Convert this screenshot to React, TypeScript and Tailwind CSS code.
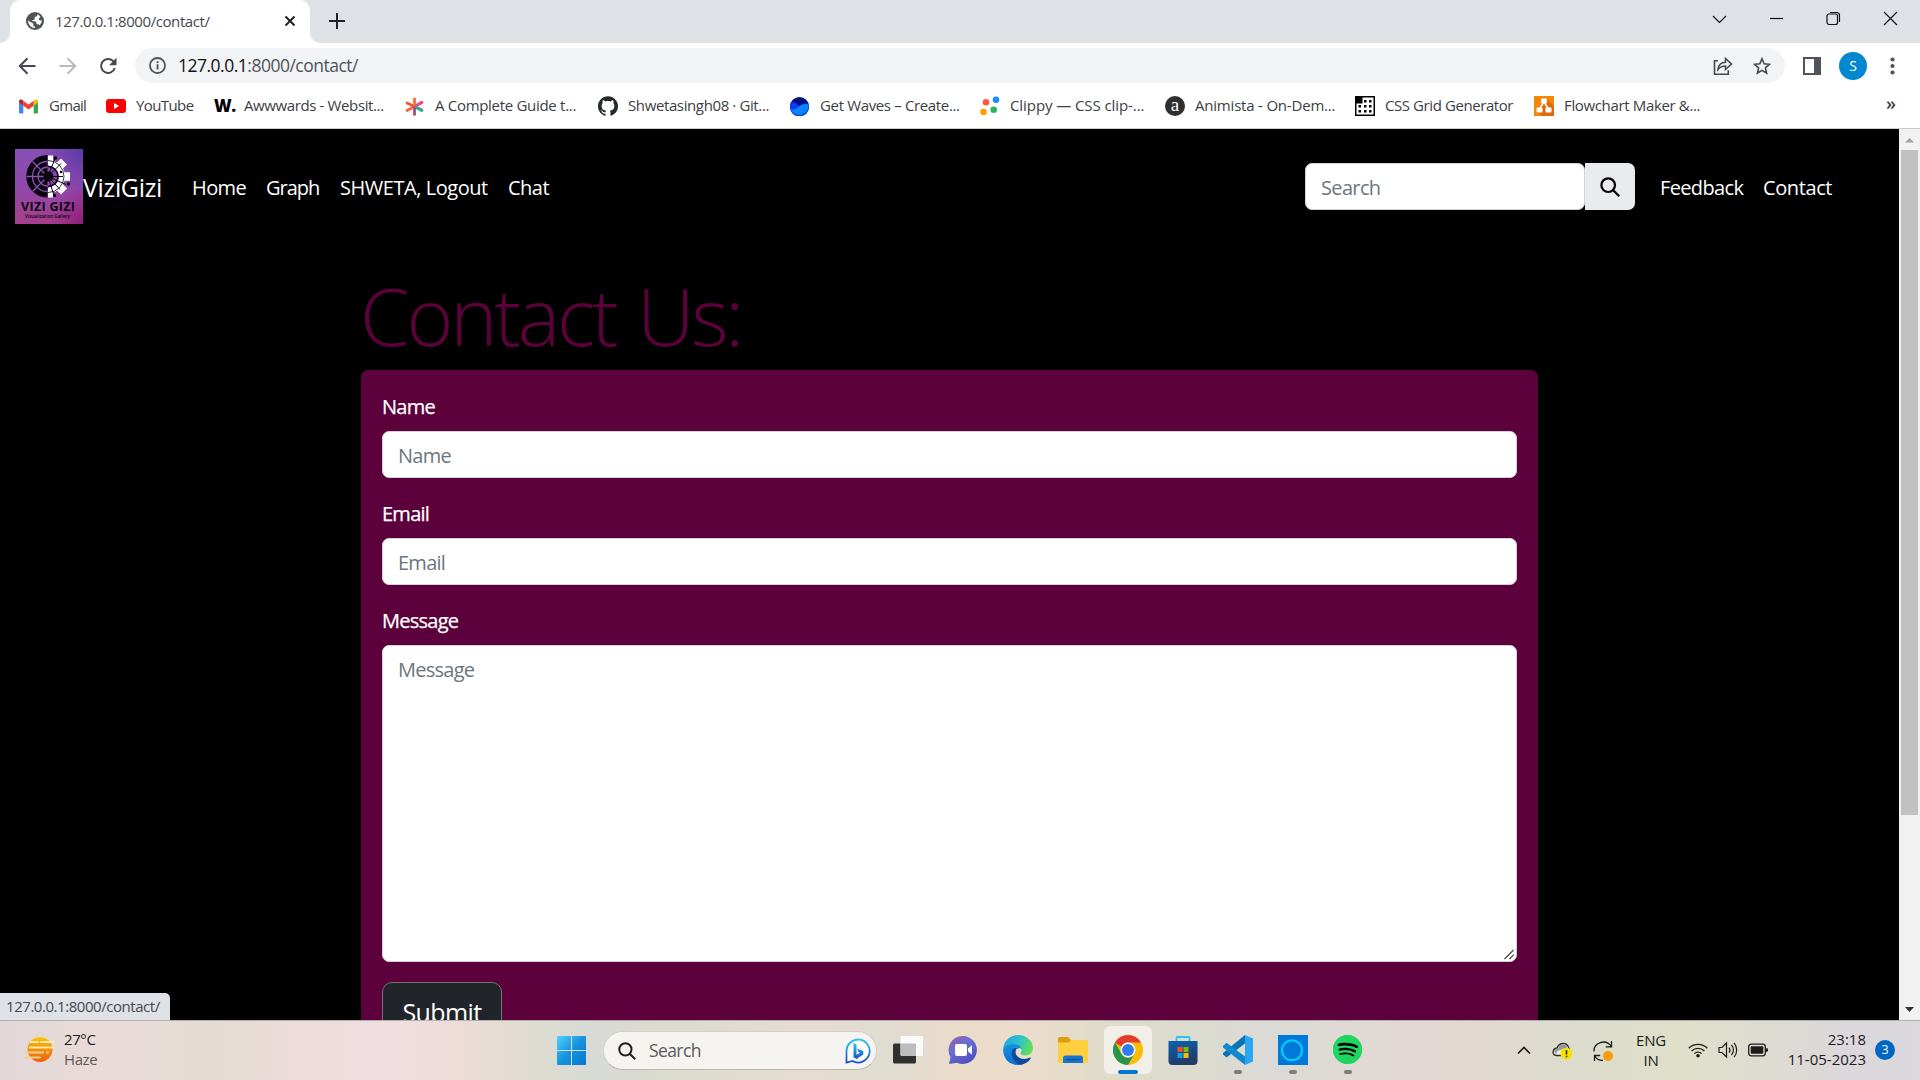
import React from "react";
import { SiGithub, SiSpotify } from "react-icons/si";

type IconProps = { className?: string };

const GlobeIcon = () => (
  <svg className="h-[18px] w-[18px]" viewBox="0 0 18 18">
    <circle cx="9" cy="9" r="9" fill="#50545a" />
    <path d="M11.300 2.300c.3 1.500-.6 2.300-1.900 2.500-1 .1-1 .8-.7 1.500.4 1-.3 1.700-1.400 1.700H6.200c0 1.200.8 1.400 2.400 1.300 1.500 0 1.800.7 1.800 1.700 0 .9.5 1.200 1.300 1.200.9 0 1.500.3 1.800 1A7 7 0 0 0 15.900 8c-.7.5-1.600.6-2.300.2-.8-.5-.9-1.300-.4-2 .5-.6 1-.8 1.200-1.600a7 7 0 0 0-3.100-2.300z" fill="#fff" />
    <path d="M2.100 8.300c1.400 1.300 3.300 2.200 4.300 2.600 1 .5 1.100 1.100.9 2-.2.700.2 1.300.9 1.400.6.200.8.800.8 1.600A6.900 6.900 0 0 1 2.100 8.300z" fill="#fff" />
  </svg>
);

const Gmail = () => (
  <svg className="h-[15px] w-[19px]" viewBox="0 0 19 14">
    <path d="M0 1.600V13a1 1 0 0 0 1 1h3.300V5.500z" fill="#4285f4" />
    <path d="M14.700 5.500V14H18a1 1 0 0 0 1-1V1.600z" fill="#34a853" />
    <path d="M14.700 1.200v5l4.300-3.300V1.800C19 .2 17.200-.5 16 .3z" fill="#fbbc04" />
    <path d="M4.300 6.200v-5L9.500 5.100l5.200-3.900v5L9.500 10.100z" fill="#ea4335" />
    <path d="M0 1.800v1.100l4.300 3.300v-5L3 .3C1.800-.5 0 .2 0 1.800z" fill="#c5221f" />
  </svg>
);

const YouTube = () => (
  <svg className="h-[14px] w-5" viewBox="0 0 20 14">
    <rect width="20" height="14" rx="3" fill="#f00" />
    <path d="M8 4v6l5.200-3z" fill="#fff" />
  </svg>
);

const Wmark = () => (
  <span className="flex h-5 w-[22px] items-center font-['Open_Sans','Liberation_Sans',sans-serif] text-[17px] font-extrabold tracking-[-0.5px] text-black">
    W.
  </span>
);

const Asterisk = () => (
  <svg className="h-[19px] w-[19px]" viewBox="0 0 19 19">
    <g strokeWidth="2.700" strokeLinecap="round" fill="none">
      <path d="M2 6l15 7" stroke="#f0503c" />
      <path d="M2 13.500l15-8" stroke="#ff5e3a" />
      <path d="M9.500 9.500l7-4" stroke="#e54a8a" />
      <path d="M9.500 9.500l7 4" stroke="#1fb0a0" />
      <path d="M9.500 1.800v15.500" stroke="#ff6a2b" />
      <path d="M9.500 10v7.300" stroke="#a0508c" />
    </g>
  </svg>
);

const Waves = () => (
  <svg className="h-[19px] w-[19px]" viewBox="0 0 19 19">
    <circle cx="9.500" cy="9.500" r="9.500" fill="#001080" />
    <path d="M.3 7.500C2 5 5 4.500 7 7c2 2.600 4 2.500 6 .5s4-1.500 5.700.3A9.500 9.500 0 1 1 .3 7.500z" fill="#0a3cf0" />
    <path d="M.6 12.500c4 .5 6-.5 8.500-3s6-3.500 9.600-1.700A9.500 9.500 0 0 1 .6 12.500z" fill="#0a84ff" />
  </svg>
);

const Clippy = () => (
  <svg className="h-5 w-5" viewBox="0 0 20 20">
    <circle cx="6" cy="6.300" r="3.300" fill="#ff5a3c" />
    <circle cx="16" cy="3.700" r="3.300" fill="#1a8cff" />
    <circle cx="3.500" cy="16" r="3.300" fill="#ffa000" />
    <circle cx="13.700" cy="13.800" r="3.300" fill="#28b463" />
  </svg>
);

const Animista = () => (
  <span className="flex h-5 w-5 items-center justify-center rounded-full bg-[#2f2f2f] pb-[3px] font-['Liberation_Serif',serif] text-[19px] leading-none text-white">
    a
  </span>
);

const gridDots = [
  [9, 4], [14, 4], [3.5, 9], [9, 9], [14, 9], [3.5, 14], [9, 14], [14, 14],
];

const CssGrid = () => (
  <svg className="h-5 w-5" viewBox="0 0 20 20">
    <rect width="20" height="20" fill="#000" />
    <path d="M7.500 1.500h11v17h-17v-11h6z" fill="#fff" />
    <g fill="#000">
      {gridDots.map(([x, y]) => (
        <rect key={`${x}-${y}`} x={x} y={y} width="2.500" height="2.500" />
      ))}
    </g>
  </svg>
);

const Flowchart = () => (
  <svg className="h-5 w-5" viewBox="0 0 20 20">
    <rect width="20" height="20" fill="#f08705" />
    <path d="M12.500 3 20 10v10H8l-5-4z" fill="#df6c0c" />
    <path d="M10 6 5.500 13M10 6l4.500 7" stroke="#fff" strokeWidth="1.500" />
    <rect x="7" y="2.500" width="6" height="5" rx="1" fill="#fff" />
    <rect x="2.500" y="11.500" width="6" height="5" rx="1" fill="#fff" />
    <rect x="11.500" y="11.500" width="6" height="5" rx="1" fill="#fff" />
  </svg>
);

const bookmarks = [
  { label: "Gmail", icon: <Gmail />, width: "w-[87px]", text: "tracking-[-0.7px]" },
  { label: "YouTube", icon: <YouTube />, width: "w-[108px]", text: "tracking-[-0.6px]" },
  { label: "Awwwards - Websit...", icon: <Wmark />, width: "w-[191px]", text: "tracking-[-0.38px]" },
  { label: "A Complete Guide t...", icon: <Asterisk />, width: "w-[193px]", text: "tracking-[-0.3px]" },
  { label: "Shwetasingh08 · Git...", icon: <SiGithub className="h-5 w-5 text-[#24292f]" />, width: "w-[192px]", text: "tracking-[-0.38px]" },
  { label: "Get Waves – Create...", icon: <Waves />, width: "w-[190px]", text: "tracking-[-0.35px]" },
  { label: "Clippy — CSS clip-...", icon: <Clippy />, width: "w-[185px]", text: "tracking-[-0.08px]" },
  { label: "Animista - On-Dem...", icon: <Animista />, width: "w-[190px]", text: "tracking-[-0.2px]" },
  { label: "CSS Grid Generator", icon: <CssGrid />, width: "w-[179px]", text: "tracking-[-0.42px]" },
  { label: "Flowchart Maker &...", icon: <Flowchart />, width: "w-[180px]", text: "tracking-[-0.35px]" },
];

function TabStrip() {
  return (
    <div className="flex h-[43px] shrink-0 items-stretch bg-[#dee1e6]">
      <div className="flex w-2.5 items-end bg-white">
        <div className="h-full w-full rounded-br-[10px] bg-[#dee1e6]" />
      </div>
      <div className="w-[300px] bg-[#dee1e6]">
        <div className="flex h-full items-center rounded-t-[10px] bg-white pb-px pl-4 pr-3.5">
          <GlobeIcon />
          <span className="ml-[11px] flex-1 text-[15px] tracking-[-0.42px] text-[#45494d]">127.0.0.1:8000/contact/</span>
          <svg className="h-[12px] w-[12px]" viewBox="0 0 12 12">
            <path d="M1.500 1.500l9 9m0-9l-9 9" stroke="#202124" strokeWidth="2" />
          </svg>
        </div>
      </div>
      <div className="w-2.5 bg-white">
        <div className="h-full w-full rounded-bl-[10px] bg-[#dee1e6]" />
      </div>
      <svg className="ml-[9px] mt-[13px] h-4 w-4" viewBox="0 0 16 16">
        <path d="M8 0v16M0 8h16" stroke="#202124" strokeWidth="2" />
      </svg>
      <div className="ml-auto mr-px flex h-[37px] items-center">
        {[
          "M2 6l6.500 6.500L15 6",
          "M2 8.500h13",
          "",
          "M2 2l13 13M15 2L2 15",
        ].map((d, i) => (
          <div key={i} className="flex w-[57px] items-center justify-center">
            <svg className="h-[17px] w-[17px]" viewBox="0 0 17 17" fill="none" stroke="#111" strokeWidth="1.200">
              {d ? (
                <path d={d} />
              ) : (
                <g>
                  <rect x="2" y="4" width="10.500" height="10.500" rx="2" />
                  <path d="M5 2.500h6.500a3 3 0 0 1 3 3v6.500" />
                </g>
              )}
            </svg>
          </div>
        ))}
      </div>
    </div>
  );
}

function Toolbar() {
  return (
    <div className="flex h-[45px] shrink-0 items-center bg-white">
      <svg className="ml-[18px] h-[18px] w-[18px]" viewBox="0 0 18 18" fill="none" stroke="#45494d" strokeWidth="2">
        <path d="M17.500 9H2M9.500 1.300L1.800 9l7.700 7.700" />
      </svg>
      <svg className="ml-[23px] h-[18px] w-[18px]" viewBox="0 0 18 18" fill="none" stroke="#b9bbbe" strokeWidth="2">
        <path d="M.5 9H16M8.500 1.300L16.200 9l-7.700 7.700" />
      </svg>
      <svg className="ml-[22px] h-[18px] w-[18px]" viewBox="0 0 18 18">
        <path d="M15.800 11A7 7 0 1 1 14 3.900L16 6" fill="none" stroke="#45494d" strokeWidth="2" />
        <path d="M17.500.8v7.400h-7.400z" fill="#45494d" />
      </svg>
      <div className="ml-[18px] flex h-[35px] w-[1650px] items-center rounded-full bg-[#f1f3f4] pl-3.5 pr-3.5">
        <svg className="h-[17px] w-[17px]" viewBox="0 0 17 17">
          <circle cx="8.500" cy="8.500" r="7.500" fill="none" stroke="#50545a" strokeWidth="1.800" />
          <path d="M7.600 7.300h1.900v5.200H7.600zM7.600 4.200h1.900v1.900H7.600z" fill="#50545a" />
        </svg>
        <span className="ml-[12px] text-[17.500px] tracking-[-0.5px] text-[#50545a]">
          <span className="text-[#111]">127.0.0.1</span>:8000/contact/
        </span>
        <svg className="ml-auto h-5 w-5" viewBox="0 0 20 20" fill="none" stroke="#45494d" strokeWidth="1.600">
          <path d="M5 4.800H1.500v13.500h13.800v-4" />
          <path d="M5 13.500c.4-4.500 3-7 7.500-7.200V2.500L18.500 8l-6 5.500V10C9.500 10 7 11 5 13.500z" />
        </svg>
        <svg className="ml-5 h-[18px] w-[18px]" viewBox="0 0 18 18" fill="none" stroke="#45494d" strokeWidth="1.600">
          <path d="M9 1.800l2.100 5 5.400.5-4.100 3.600 1.200 5.300L9 13.400l-4.600 2.800 1.200-5.300L1.500 7.300l5.400-.5z" />
        </svg>
      </div>
      <div className="ml-[18px] h-[18px] w-[18px] border-2 border-r-[7px] border-[#50545a]" />
      <div className="ml-[18px] flex h-7 w-7 items-center justify-center rounded-full bg-[#0288d1] text-[14px] text-white">S</div>
      <svg className="ml-[23px] h-[18px] w-[5px]" viewBox="0 0 5 18" fill="#50545a">
        <circle cx="2.500" cy="2.500" r="2.100" />
        <circle cx="2.500" cy="9" r="2.100" />
        <circle cx="2.500" cy="15.500" r="2.100" />
      </svg>
    </div>
  );
}

function BookmarksBar() {
  return (
    <div className="flex h-[41px] shrink-0 items-center border-b border-[#c9ccd0] bg-white pb-1 pl-[19px] pr-6">
      {bookmarks.map((b) => (
        <div key={b.label} className={`flex shrink-0 items-center ${b.width}`}>
          <div className="flex w-[30px] shrink-0 items-center">{b.icon}</div>
          <span className={`whitespace-nowrap pb-0.5 text-[15px] leading-5 text-[#3c4043] ${b.text}`}>{b.label}</span>
        </div>
      ))}
      <span className="ml-auto pb-1.5 text-[18px] font-semibold leading-5 text-[#3c4043]">»</span>
    </div>
  );
}

function SiteLogo() {
  return (
    <svg className="h-[75px] w-[68px] shrink-0" viewBox="0 0 68 75">
      <defs>
        <linearGradient id="logoBg" x1="0" y1="0" x2="0" y2="1">
          <stop offset="0" stopColor="#8650b4" />
          <stop offset=".5" stopColor="#9048ac" />
          <stop offset="1" stopColor="#a63f8c" />
        </linearGradient>
        <radialGradient id="logoShade" cx="1" cy="0" r=".6">
          <stop offset="0" stopColor="#5534a4" stopOpacity=".8" />
          <stop offset="1" stopColor="#5534a4" stopOpacity="0" />
        </radialGradient>
        <radialGradient id="logoShadeLow" cx="1" cy="1" r=".5">
          <stop offset="0" stopColor="#8a1478" stopOpacity=".8" />
          <stop offset="1" stopColor="#8a1478" stopOpacity="0" />
        </radialGradient>
      </defs>
      <rect width="68" height="75" fill="url(#logoBg)" />
      <rect width="68" height="75" fill="url(#logoShade)" />
      <rect width="68" height="75" fill="url(#logoShadeLow)" />
      <path d="M32.500 6a21.300 21.300 0 0 0 0 42.600z" fill="#0a0610" />
      <g fill="none" stroke="#fff">
        <path d="M33.500 14a13.500 13.500 0 0 1 0 27" strokeWidth="6" />
        <path d="M35.500 6.500v9M35.500 39.500v9" strokeWidth="5" />
        <path d="M44 17.500l5-5M44 37.500l5 5M46 27.500h9" strokeWidth="8.500" />
      </g>
      <g fill="none" stroke="#8c50b4" strokeWidth="1.300">
        <path d="M32.500 12.500a15 15 0 0 0 0 30M32.500 18a9.500 9.500 0 0 0 0 19" />
        <path d="M11.500 27.500H29M17.500 12.500l12 12M17.500 42.500l12-12" />
      </g>
      <g fill="none" stroke="#0a0610">
        <path d="M33 17.500a10 10 0 0 1 0 20" strokeWidth="1.300" />
        <path d="M33 11.500a16 16 0 0 1 0 32" strokeWidth=".8" />
        <path d="M33 27.500l7-18M33 27.500l13-13M33 27.500h15M33 27.500l18 8M33 27.500l12 13M33 27.500l6 19" strokeWidth="1" />
      </g>
      <circle cx="33.500" cy="27.500" r="5" fill="#0a0610" />
      <g fill="#0a0610">
        <circle cx="40.500" cy="9" r="1.700" />
        <circle cx="46" cy="23" r="1.300" />
        <circle cx="53.500" cy="35" r="1.700" />
        <circle cx="39.500" cy="46.500" r="1.700" />
      </g>
      <text x="33" y="61.500" textAnchor="middle" textLength="54" fontFamily="Open Sans, sans-serif" fontWeight="700" fontSize="12.500" fill="#0a0610">VIZI GIZI</text>
      <text x="32.500" y="69" textAnchor="middle" textLength="45" lengthAdjust="spacingAndGlyphs" fontFamily="Open Sans, sans-serif" fontWeight="600" fontSize="5.500" fill="#0a0610">Visualization Gallery</text>
    </svg>
  );
}

function SearchIcon({ className }: IconProps) {
  return (
    <svg className={className} viewBox="0 0 20 20" fill="none" strokeWidth="2.200">
      <circle cx="8.200" cy="8.200" r="6.800" stroke="currentColor" />
      <path d="M13 13l6.200 6.200" stroke="currentColor" />
    </svg>
  );
}

function Navbar() {
  return (
    <nav className="flex h-[115px] shrink-0 items-center pl-[15px] pr-[61px] text-[20px] leading-[30px] text-white">
      <SiteLogo />
      <span className="w-[109px] whitespace-nowrap text-[25px] tracking-[-0.35px]">ViziGizi</span>
      <div className="flex pt-[3px]">
        <a className="w-[74px] tracking-[-0.6px]">Home</a>
        <a className="w-[74px] tracking-[-1px]">Graph</a>
        <a className="w-[168px] whitespace-nowrap tracking-[-0.45px]">SHWETA, Logout</a>
        <a className="w-[60px] tracking-[-0.5px]">Chat</a>
      </div>
      <div className="ml-auto flex h-[47px] items-stretch">
        <div className="flex w-[280px] items-center rounded-[7px] border border-[#ced4da] bg-white pl-[15px] pt-0.5 tracking-[-0.65px] text-[#6c757d]">Search</div>
        <div className="flex w-[50px] items-center justify-center rounded-r-[7px] bg-[#e9ecef] text-black">
          <SearchIcon className="h-5 w-5" />
        </div>
      </div>
      <div className="ml-[25px] flex pt-[3px]">
        <a className="w-[103px] tracking-[-0.65px]">Feedback</a>
        <a className="w-[75px] tracking-[-0.4px]">Contact</a>
      </div>
    </nav>
  );
}

function Field({ label, tall }: { label: string; tall?: boolean }) {
  return (
    <div className="mb-5">
      <div className="mb-2 h-8 pt-px leading-[30px] tracking-[-0.75px] text-white [-webkit-text-stroke:0.25px_white]">{label}</div>
      <div
        className={`relative rounded-[7px] border border-[#ced4da] bg-white px-[15px] pt-[9px] leading-[30px] tracking-[-0.75px] text-[#6c757d] ${tall ? "h-[317px]" : "h-[47px]"}`}
      >
        {label}
        {tall && (
          <svg className="absolute bottom-px right-px h-[11px] w-[11px]" viewBox="0 0 11 11" stroke="#444" strokeWidth="1.200">
            <path d="M.5 10L9.500 1M5.500 10L9.800 5.700" />
          </svg>
        )}
      </div>
    </div>
  );
}

function Page() {
  return (
    <div className="flex min-h-0 flex-1 bg-black">
      <main className="relative flex min-w-0 flex-1 flex-col overflow-hidden">
        <Navbar />
        <div className="ml-[361px] mt-5 w-[1177px] text-[20px]">
          <h1 className="-ml-px h-[106px] whitespace-nowrap text-[80px] font-light leading-[101px] tracking-[-3.200px] text-[#5c013b] [word-spacing:4px]">Contact Us:</h1>
          <div className="h-[700px] rounded-[7px] bg-[#5c013b] px-[21px] pt-[21px]">
            <Field label="Name" />
            <Field label="Email" />
            <Field label="Message" tall />
            <button className="h-[60px] w-[120px] rounded-[10px] border border-[#6c757d] bg-[#212529] pt-0.5 text-[25px] tracking-[-0.6px] text-white">Submit</button>
          </div>
        </div>
        <div className="absolute bottom-0 left-0 h-[27px] w-[170px] rounded-tr-[5px] bg-[#dee1e6] pl-1.5 text-[15px] leading-[27px] tracking-[-0.45px] text-[#45494d]">
          127.0.0.1:8000/contact/
        </div>
      </main>
      <div className="flex w-[21px] flex-col items-center bg-[#f1f1f1]">
        <svg className="h-[21px] w-[21px]" viewBox="0 0 21 21">
          <path d="M6 13.500h9L10.500 9z" fill="#a0a0a0" />
        </svg>
        <div className="h-[665px] w-[17px] bg-[#c1c1c1]" />
        <svg className="mt-auto h-[21px] w-[21px]" viewBox="0 0 21 21">
          <path d="M6 8h9l-4.500 5z" fill="#333" />
        </svg>
      </div>
    </div>
  );
}

const TaskView = () => (
  <svg className="h-[30px] w-[30px]" viewBox="0 0 30 30">
    <rect y="8.500" width="23" height="20" rx="1.500" fill="#303030" />
    <rect x="7.500" y="1" width="22.500" height="20" rx="1.500" fill="#fafafa" />
    <path d="M7.500 8.500H23V21H9a1.500 1.500 0 0 1-1.500-1.500z" fill="#bdbdbd" />
  </svg>
);

const Chat = () => (
  <svg className="h-[30px] w-[30px]" viewBox="0 0 30 30">
    <defs>
      <linearGradient id="chat" x1="0" y1="0" x2=".6" y2="1">
        <stop offset="0" stopColor="#9a5fa8" />
        <stop offset=".45" stopColor="#6b6fd0" />
        <stop offset="1" stopColor="#4f50c0" />
      </linearGradient>
    </defs>
    <path d="M15 1a14 14 0 1 1-6 26.700L1 29l1.500-7A14 14 0 0 1 15 1z" fill="url(#chat)" />
    <rect x="7" y="9" width="12" height="12" rx="2" fill="#fff" />
    <path d="M20 13.500l4-3.300v9.600l-4-3.300z" fill="#fff" />
  </svg>
);

const Edge = () => (
  <svg className="h-[30px] w-[30px]" viewBox="0 0 30 30">
    <defs>
      <linearGradient id="edgeTop" x1="0" y1=".3" x2="1" y2=".6">
        <stop offset="0" stopColor="#1fa4e6" />
        <stop offset=".5" stopColor="#2fc2c8" />
        <stop offset="1" stopColor="#66e04e" />
      </linearGradient>
      <linearGradient id="edgeLow" x1="0" y1="0" x2="0" y2="1">
        <stop offset="0" stopColor="#1292dc" />
        <stop offset="1" stopColor="#0b6fd0" />
      </linearGradient>
    </defs>
    <path d="M.2 13.500C1 5.500 7.500 0 15 0c8.500 0 15 6 15 13 0 4.500-3.500 7.500-7.500 7.500-3 0-5-1-5-2.200 0-.8 1-1.300 1-3.300 0-2.800-3-5.500-8-5.500-4.500 0-8 1.500-10.300 4z" fill="url(#edgeTop)" />
    <path d="M.1 14C1.500 10.500 5.500 9 10.500 9c4.500 0 7.800 2.300 8 5-1-1.500-6.500-1-6.500 4.500 0 5 4 10.500 9 10.200-2 .9-4 1.300-6 1.300C6 30 0 23.500.1 14z" fill="url(#edgeLow)" />
    <path d="M10.500 13.500C8.500 16 8 19 9.500 22.500 11.500 27.500 16 30 19 29.500c4-.8 7.500-3.500 8.700-6.200.3-.6-.2-1-.8-.7-6 3-14 .7-14.400-5.600-.1-1.500.4-3 1.300-3.900-1.200-.3-2.400-.2-3.300.4z" fill="#0c4a9c" />
  </svg>
);

const Folder = () => (
  <svg className="h-[30px] w-[30px]" viewBox="0 0 30 30">
    <path d="M0 4a2 2 0 0 1 2-2h8l3 3v5H0z" fill="#e09c0a" />
    <path d="M0 7.500h10.500L13 5h15a2 2 0 0 1 2 2v21H0z" fill="#ffcf3f" />
    <path d="M5 28v-5a2.500 2.500 0 0 1 2.500-2.500h15A2.500 2.500 0 0 1 25 23v5z" fill="#1476cf" />
    <path d="M8.500 24.500h13" stroke="#0a4f98" strokeWidth="1.300" />
  </svg>
);

const Chrome = () => (
  <svg className="h-[30px] w-[30px]" viewBox="0 0 30 30">
    <circle cx="15" cy="15" r="15" fill="#fbbc05" />
    <path d="M15 0a15 15 0 0 1 13 7.500H15A7.500 7.500 0 0 0 8.500 11.200L2 7.500A15 15 0 0 1 15 0z" fill="#e33b2e" />
    <path d="M2 7.500l6.500 11.300a7.500 7.500 0 0 0 6.500 3.700 7.500 7.500 0 0 0 6.500-3.700L15 30A15 15 0 0 1 2 7.500z" fill="#28934a" />
    <path d="M2 7.500h8l-1.500 4z" fill="#e33b2e" />
    <circle cx="15" cy="15" r="7.500" fill="#fff" />
    <circle cx="15" cy="15" r="6" fill="#2f7cf0" />
  </svg>
);

const Store = () => (
  <svg className="h-[30px] w-[30px]" viewBox="0 0 30 30">
    <defs>
      <linearGradient id="store" x1="0" y1="0" x2=".4" y2="1">
        <stop offset="0" stopColor="#0a64b4" />
        <stop offset="1" stopColor="#233a63" />
      </linearGradient>
    </defs>
    <path d="M8.500 6V3a1 1 0 0 1 1-1h11a1 1 0 0 1 1 1v3" fill="none" stroke="#2bc1f5" strokeWidth="1.800" />
    <path d="M.5 6h29v20a4 4 0 0 1-4 4h-21a4 4 0 0 1-4-4z" fill="url(#store)" />
    <rect x="9.500" y="12" width="5" height="5" fill="#f25022" />
    <rect x="15.500" y="12" width="5" height="5" fill="#7fba00" />
    <rect x="9.500" y="18" width="5" height="5" fill="#00a4ef" />
    <rect x="15.500" y="18" width="5" height="5" fill="#ffb900" />
  </svg>
);

const VsCode = () => (
  <svg className="h-[30px] w-[30px]" viewBox="0 0 30 30">
    <path d="M22 0v8.500L3.500 22.500 0 19.500v-1.500z" fill="#0a72b8" />
    <path d="M0 11l3.500-3.200L22 21.500V30L0 12.500z" fill="#1187cc" />
    <path d="M22 0l8 3.500v23L22 30z" fill="#2aa7f2" />
  </svg>
);

const Alexa = () => (
  <svg className="h-[30px] w-[30px]" viewBox="0 0 30 30">
    <rect width="30" height="30" fill="#0078d7" />
    <path d="M13.200 25.300A10 10 0 1 1 19 24c-1.800.8-3.800 1-5.200 1.200z" fill="none" stroke="#00cdfa" strokeWidth="2.300" />
  </svg>
);

const apps = [
  { name: "taskview", icon: <TaskView /> },
  { name: "chat", icon: <Chat /> },
  { name: "edge", icon: <Edge /> },
  { name: "folder", icon: <Folder /> },
  { name: "chrome", icon: <Chrome />, active: true },
  { name: "store", icon: <Store /> },
  { name: "code", icon: <VsCode />, running: true },
  { name: "alexa", icon: <Alexa />, running: true },
  {
    name: "spotify",
    icon: (
      <span className="flex h-[29px] w-[29px] items-center justify-center rounded-full bg-[radial-gradient(circle,#000_60%,#1ed760_62%)]">
        <SiSpotify className="h-[29px] w-[29px] text-[#1ed760]" />
      </span>
    ),
    running: true,
  },
];

function Taskbar() {
  return (
    <footer className="flex h-[60px] shrink-0 items-center border-t border-[#b4b0ae] bg-[linear-gradient(90deg,#e2d8d7_0%,#eadbda_6%,#e3dbd2_11%,#eddcda_15%,#f1dde0_20%,#eddcd8_24%,#dcdcd0_28%,#d8dad6_31%,#dadccd_35%,#e6dcd2_42%,#dfdcd0_46%,#ebdcca_50%,#ecdccb_53%,#dddcc8_58%,#dbdad6_66%,#e4d8d3_75%,#dcdccd_82%,#e0dfc9_88%,#dad8da_96%,#dcd8de_100%)]">
      <svg className="mb-0.5 ml-[25px] h-[27px] w-[30px]" viewBox="0 0 30 27">
        <defs>
          <linearGradient id="haze" x1="0" y1="0" x2="0" y2="1">
            <stop offset="0" stopColor="#fcc40a" />
            <stop offset="1" stopColor="#ea5e0c" />
          </linearGradient>
        </defs>
        <circle cx="15" cy="13.500" r="12.500" fill="url(#haze)" />
        <g strokeWidth="2" strokeLinecap="round">
          <path d="M6 6h7M16 6h13M5 11.500h23" stroke="#fbe9ae" />
          <path d="M1 16.500h17M22 16.500h1M1 21.500h14" stroke="#f3cf8f" />
        </g>
      </svg>
      <div className="ml-[9px] w-[493px] pb-1 text-[15px] leading-[20px] tracking-[-0.4px]">
        <div className="text-[#1c1c1c]">27°C</div>
        <div className="text-[#5c5857]">Haze</div>
      </div>
      <svg className="h-[29px] w-[29px]" viewBox="0 0 29 29">
        <defs>
          <linearGradient id="win" x1="0" y1="0" x2="1" y2="1">
            <stop offset="0" stopColor="#4fd0fd" />
            <stop offset=".5" stopColor="#1793de" />
            <stop offset="1" stopColor="#0377d2" />
          </linearGradient>
        </defs>
        <path d="M1 0h13v14H0V1a1 1 0 0 1 1-1zM15 0h13a1 1 0 0 1 1 1v13H15zM0 15h14v14H1a1 1 0 0 1-1-1zM15 15h14v13a1 1 0 0 1-1 1H15z" fill="url(#win)" />
      </svg>
      <div className="ml-[17px] flex h-[39px] w-[274px] items-center rounded-full border border-[#d3d0ca] border-b-[#b9b6b0] bg-[#f5f4f1] pl-3.5 pr-[5px] text-[#1f1f1f]">
        <SearchIcon className="h-[18px] w-[18px]" />
        <span className="ml-[13px] text-[17.500px] tracking-[-0.6px] text-[#5a5a5a]">Search</span>
        <svg className="ml-auto h-[26px] w-[26px]" viewBox="0 0 26 26">
          <defs>
            <linearGradient id="bing" x1="0" y1="0" x2="0" y2="1">
              <stop offset="0" stopColor="#2cc8ee" />
              <stop offset="1" stopColor="#1c50c8" />
            </linearGradient>
          </defs>
          <path d="M13.500 1.500a11.500 11.500 0 1 1-6 21.500l-6 1.500V13a11.700 11.700 0 0 1 12-11.500z" fill="#fff" stroke="url(#bing)" strokeWidth="1.800" />
          <path d="M8.500 5l3 1.300v10.400l3.500-2-1.600-.8-1.400-3.400 6.300 2.400v3.500L11.500 21l-3-1.800z" fill="url(#bing)" />
        </svg>
      </div>
      <div className="ml-[3px] flex h-full">
        {apps.map((a) => (
          <div key={a.name} className="flex w-[55px] justify-center pt-[5px]">
            <div className={`relative flex h-12 w-12 items-center justify-center rounded-md pb-px ${a.active ? "bg-[#f2eee8] shadow-[0_0_1px_1px_#dfdad0]" : ""}`}>
              {a.icon}
              {a.active && <span className="absolute bottom-0 left-3.5 h-1 w-5 rounded-full bg-[#0078d4]" />}
              {a.running && <span className="absolute bottom-0 left-5 h-1 w-2 rounded-full bg-[#7f7c78]" />}
            </div>
          </div>
        ))}
      </div>
      <div className="ml-auto flex items-center pb-0.5 text-[15px] leading-5 tracking-[-0.2px] text-[#1c1c1c]">
        <svg className="h-2.5 w-3.5" viewBox="0 0 14 10" fill="none" stroke="#1c1c1c" strokeWidth="1.700">
          <path d="M1 8.500l6-6 6 6" />
        </svg>
        <svg className="ml-[21px] mr-px mt-0.5 h-[18px] w-[21px]" viewBox="0 0 21 18">
          <path d="M4.500 13.500C-.5 13 .3 6.500 5 6 7 .500 14 0 16.200 4.500L18 9l-6 4.500z" fill="#f2f2ee" stroke="#2a2a2a" strokeWidth="1.300" />
          <path d="M4.500 12C4.500 7 9 9 15.500 5 13.500 1 7.500 1.500 5.800 6.500 1.500 6.800 1.500 11 4.500 12z" fill="#999" />
          <circle cx="14.500" cy="11.700" r="6" fill="#fae100" />
          <path d="M14.500 8.200v4.300M14.500 13.700v1.500" stroke="#222" strokeWidth="1.500" />
        </svg>
        <svg className="ml-[19px] mt-0.5 h-5 w-5" viewBox="0 0 20 20" fill="none" stroke="#1c1c1c" strokeWidth="1.300">
          <path d="M1 10.500C.5 2 12.500-3 18.300 5.500M18.500 0v5.800h-5.800M10 19.400c-3.500.2-6.500-1.400-8.300-4.700M1.500 20v-5.500h5.700" />
          <circle cx="15" cy="15" r="5" fill="#ff9a0a" stroke="none" />
        </svg>
        <div className="ml-[23px] w-[30px] text-center">
          <div>ENG</div>
          <div>IN</div>
        </div>
        <svg className="ml-[22px] h-4 w-5" viewBox="0 0 20 16" fill="none" stroke="#1c1c1c" strokeWidth="1.300">
          <path d="M.7 6.200a13 13 0 0 1 18.600 0M3.600 9a9 9 0 0 1 12.800 0M6.400 11.600a5.100 5.100 0 0 1 7.200 0" />
          <circle cx="10" cy="13.800" r="1.800" fill="#1c1c1c" stroke="none" />
        </svg>
        <svg className="ml-2.5 h-[18px] w-5" viewBox="0 0 20 18" fill="none" stroke="#1c1c1c" strokeWidth="1.200">
          <path d="M1 6.500h3L8.500 2v14L4 11.500H1z" />
          <path d="M11 6.500a4 4 0 0 1 0 5M13.500 4a7.500 7.500 0 0 1 0 10M16 1.800a11 11 0 0 1 0 14.400" />
        </svg>
        <svg className="ml-2.5 h-3.5 w-5" viewBox="0 0 20 14">
          <rect x=".7" y="1.200" width="16.600" height="11.600" rx="2.500" fill="none" stroke="#1c1c1c" strokeWidth="1.300" />
          <rect x="2.700" y="3.200" width="12.600" height="7.600" rx="1" fill="#1c1c1c" />
          <path d="M18 5.200h.8a1.200 1.200 0 0 1 1.200 1.200v1.200a1.200 1.200 0 0 1-1.200 1.200H18z" fill="#1c1c1c" />
        </svg>
        <div className="ml-4 w-[82px] whitespace-nowrap pb-0.5 text-right tracking-[0px]">
          <div>23:18</div>
          <div>11-05-2023</div>
        </div>
        <div className="ml-[9px] mr-[25px] flex h-5 w-5 items-center justify-center rounded-full bg-[#0067c0] text-[12.500px] text-white">3</div>
      </div>
    </footer>
  );
}

export default function App() {
  return (
    <div className="flex h-[1080px] w-[1920px] flex-col overflow-hidden font-['Open_Sans','Noto_Sans',sans-serif]">
      <TabStrip />
      <Toolbar />
      <BookmarksBar />
      <Page />
      <Taskbar />
    </div>
  );
}
